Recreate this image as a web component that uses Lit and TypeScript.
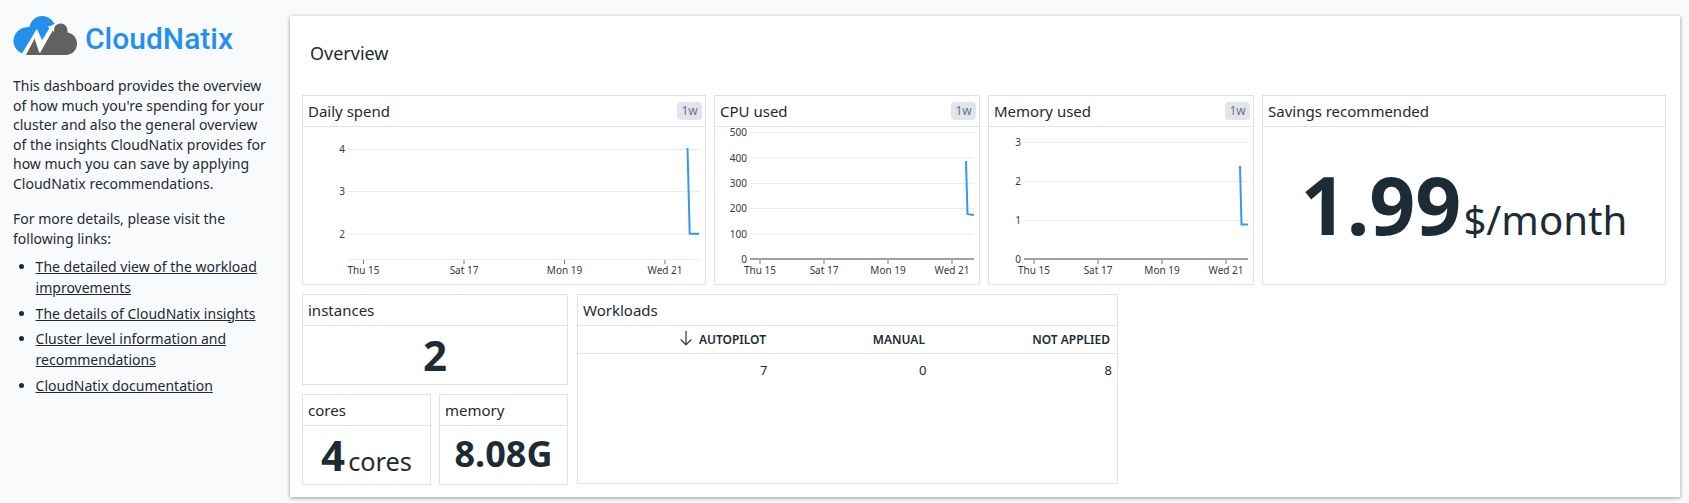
import { LitElement, html, svg, css } from "lit";
import { customElement, property } from "lit/decorators.js";

interface Mark { at: number; label: string; }
interface ChartSpec {
  width: number;
  left: number;
  right: number;
  baseline: boolean;
  rows: Mark[];
  ticks: Mark[];
  line: string;
}

const days = (xs: number[]): Mark[] =>
  ["Thu 15", "Sat 17", "Mon 19", "Wed 21"].map((label, i) => ({ at: xs[i], label }));

const DAILY: ChartSpec = {
  width: 402, left: 45, right: 397, baseline: false,
  rows: [{ at: 22.5, label: "4" }, { at: 64.5, label: "3" }, { at: 107, label: "2" }],
  ticks: days([60.5, 161, 261.5, 362]),
  line: "M384.5 21L386.7 106.8H396",
};
const CPU: ChartSpec = {
  width: 264, left: 35, right: 259, baseline: true,
  rows: [
    { at: 5.5, label: "500" }, { at: 31, label: "400" }, { at: 56.5, label: "300" },
    { at: 81.5, label: "200" }, { at: 107, label: "100" }, { at: 132, label: "0" },
  ],
  ticks: days([45, 109, 173, 237]),
  line: "M251 34L252.5 87.2L259 88",
};
const MEMORY: ChartSpec = {
  width: 264, left: 35, right: 259, baseline: true,
  rows: [
    { at: 15.5, label: "3" }, { at: 54.5, label: "2" },
    { at: 93.5, label: "1" }, { at: 132, label: "0" },
  ],
  ticks: days([45, 109, 173, 237]),
  line: "M251 39L252.5 97.6H259",
};

@customElement("line-chart")
export class LineChart extends LitElement {
  @property({ attribute: false }) spec!: ChartSpec;

  static styles = css`
    :host { display: block; }
    svg { display: block; }
    text { font: 10px "Noto Sans", sans-serif; fill: #2f3b44; }
    .value { text-anchor: end; }
    .day { text-anchor: middle; }
    .grid { stroke: #ebebed; stroke-width: 1; }
    .zero { stroke: #9f9fae; stroke-width: 2; }
    .tick { stroke: #75758c; stroke-width: 1; }
    .series { fill: none; stroke: #3598ec; stroke-width: 2; }
  `;

  render() {
    const s = this.spec;
    return html`<svg width=${s.width} height="157" viewBox="0 0 ${s.width} 157">
      ${s.rows.map((r) => svg`
        <line class="grid" x1=${s.left} x2=${s.right} y1=${r.at} y2=${r.at}></line>
        <text class="value" x=${s.left - 3} y=${Math.floor(r.at) + 4}>${r.label}</text>`)}
      ${s.ticks.map((t) => svg`
        <line class="tick" x1=${t.at} x2=${t.at} y1="132" y2="137"></line>
        <text class="day" x=${t.at} y="147">${t.label}</text>`)}
      <line class=${s.baseline ? "zero" : "grid"} x1=${s.left} x2=${s.right}
        y1=${s.baseline ? 132 : 132.5} y2=${s.baseline ? 132 : 132.5}></line>
      <path class="series" d=${s.line}></path>
    </svg>`;
  }
}

@customElement("dash-widget")
export class DashWidget extends LitElement {
  @property() heading = "";
  @property() range = "";

  static styles = css`
    :host {
      display: flex; flex-direction: column; box-sizing: border-box;
      border: 1px solid #e1e1ea; background: #fff; min-width: 0;
    }
    .head {
      display: flex; align-items: center; justify-content: space-between;
      flex: none; height: 30px; padding: 0 3px 0 5px;
      border-bottom: 1px solid #e1e1ea; font-size: 15px; line-height: 30px;
    }
    .range {
      height: 18px; line-height: 17px; padding: 0 4.3px; border-radius: 4px;
      background: #e1e4ed; color: #6c7480; font-size: 12px;
    }
    .body { flex: 1; min-height: 0; display: flex; flex-direction: column; }
  `;

  render() {
    return html`
      <div class="head">
        <span class="title">${this.heading}</span>
        ${this.range ? html`<span class="range">${this.range}</span>` : null}
      </div>
      <div class="body"><slot></slot></div>`;
  }
}

@customElement("app-root")
export class AppRoot extends LitElement {
  static styles = css`
    :host {
      display: flex; box-sizing: border-box; width: 100%; height: 503px;
      overflow: hidden; background: #f9fafc; color: #1c2b34;
      font-family: "Noto Sans", sans-serif; font-size: 14px;
    }
    .side { flex: none; width: 290px; box-sizing: border-box; padding: 16px 22px 0 13px; }
    .brand { display: flex; align-items: center; height: 39px; gap: 8px; }
    .brand svg { flex: none; display: block; }
    .name {
      font: 500 30px/39px Roboto, sans-serif; color: #2490ee; white-space: nowrap;
      padding-top: 5px;
    }
    p { margin: 0 0 15.6px; line-height: 19.6px; }
    .intro { margin-top: 21px; }
    .lead { margin-bottom: 8px; }
    ul { margin: 0; padding: 0 0 0 22.6px; }
    li { line-height: 21px; margin-bottom: 4.4px; }
    a { color: inherit; text-decoration: underline; }
    .panel {
      flex: 1; min-width: 0; height: 481px; box-sizing: border-box;
      margin: 16px 9px 0 0; padding: 0 14px 0 12px; background: #fff;
      box-shadow: 0 1px 4px rgba(0, 0, 0, 0.4);
    }
    h1 { margin: 0; padding: 25px 0 0 8px; height: 54px; font-size: 18px; font-weight: 400; line-height: 25px; }
    .top { display: grid; grid-template: 190px / 404px 266px 266px 404px; gap: 8px; }
    .bottom { display: flex; gap: 9px; margin-top: 9px; }
    .stats { display: grid; grid-template: 91px 91px / 129px 129px; gap: 9px 8px; }
    .wide { grid-column: span 2; }
    .work { width: 541px; height: 190px; }
    .figure { display: flex; align-items: baseline; justify-content: center; white-space: nowrap; }
    .figure b { font-weight: 700; }
    .savings { font-size: 80.5px; line-height: 154px; gap: 2px; }
    .savings .unit { font-size: 40.2px; }
    .count { font-size: 42px; line-height: 58px; gap: 3px; }
    .count .unit { font-size: 25.3px; }
    .mem { font-size: 36px; line-height: 55px; }
    .row { display: grid; text-align: right; }
    .titles {
      grid-template-columns: 188px 159px 1fr;
      height: 27px; line-height: 27px; border-bottom: 1px solid #e1e1ea;
      font-size: 12px; font-weight: 600; padding-right: 7px;
    }
    .titles svg { vertical-align: -2px; margin-right: 7px; }
    .cells {
      grid-template-columns: 189.5px 159px 1fr;
      font-size: 13px; line-height: 32px; padding-right: 5px;
    }
  `;

  render() {
    return html`
      <aside class="side">
        <div class="brand">
          <svg width="64" height="39" viewBox="0 0 64 39">
            <path fill="#2490ee" d="M10 37.500C4 35.500 .5 31 .5 25C.5 17 7 11 16.500 11C18 4 23 0 29 0C34.500 0 39 3 41.500 8L30 26L24 13Z"></path>
            <path fill="#616161" d="M12.500 39L22 22L27 37L41 12C42 9 45 7.500 48 7.500C52 7.500 55 11 54.500 16.500C60 17 64 22 64 27.500C64 34 59 39 53 39Z"></path>
            <path fill="#fff" d="M9 37.500L23.500 13.500L28 26L36.500 12L34.500 11L41.500 8L41 16L39.500 14.500L26.300 37L21.500 22L13 39Z"></path>
          </svg>
          <span class="name">CloudNatix</span>
        </div>
        <p class="intro">This dashboard provides the overview of how much you're spending for your cluster and also the general overview of the insights CloudNatix provides for how much you can save by applying CloudNatix recommendations.</p>
        <p class="lead">For more details, please visit the following links:</p>
        <ul>
          <li><a>The detailed view of the workload improvements</a></li>
          <li><a>The details of CloudNatix insights</a></li>
          <li><a>Cluster level information and recommendations</a></li>
          <li><a>CloudNatix documentation</a></li>
        </ul>
      </aside>
      <main class="panel">
        <h1>Overview</h1>
        <section class="top">
          <dash-widget heading="Daily spend" range="1w"><line-chart .spec=${DAILY}></line-chart></dash-widget>
          <dash-widget heading="CPU used" range="1w"><line-chart .spec=${CPU}></line-chart></dash-widget>
          <dash-widget heading="Memory used" range="1w"><line-chart .spec=${MEMORY}></line-chart></dash-widget>
          <dash-widget heading="Savings recommended">
            <div class="figure savings"><b>1.99</b><span class="unit">$/month</span></div>
          </dash-widget>
        </section>
        <section class="bottom">
          <div class="stats">
            <dash-widget class="wide" heading="instances"><div class="figure count"><b>2</b></div></dash-widget>
            <dash-widget heading="cores">
              <div class="figure count"><b>4</b><span class="unit">cores</span></div>
            </dash-widget>
            <dash-widget heading="memory"><div class="figure mem"><b>8.08G</b></div></dash-widget>
          </div>
          <dash-widget class="work" heading="Workloads">
            <div class="row titles">
              <span><svg width="12" height="15" viewBox="0 0 12 15" fill="none" stroke="#3c4850" stroke-width="1.3"><path d="M6 0V14M.7 8.500L6 13.800L11.300 8.500"></path></svg>AUTOPILOT</span>
              <span>MANUAL</span>
              <span>NOT APPLIED</span>
            </div>
            <div class="row cells"><span>7</span><span>0</span><span>8</span></div>
          </dash-widget>
        </section>
      </main>`;
  }
}
